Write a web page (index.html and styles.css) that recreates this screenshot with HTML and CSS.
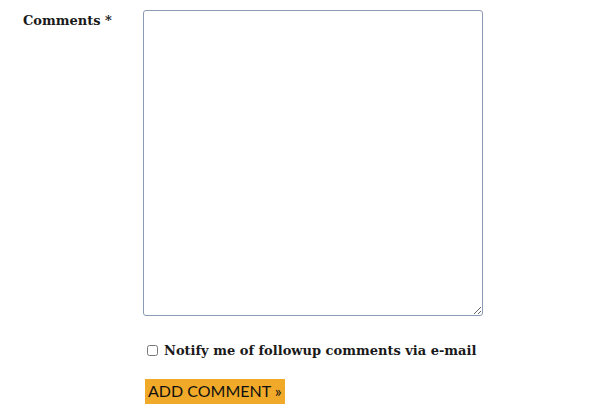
FILE: index.html
```html
<!DOCTYPE html>
<html lang="en">
<head>
    <meta charset="UTF-8">
    <title>Comments</title>
    <link rel="stylesheet" href="styles.css">
</head>
<body>
    <form class="comment-form">
        <div class="form-row">
            <label class="field-label" for="comment">Comments *</label>
            <textarea id="comment" class="comment-box"></textarea>
        </div>
        <div class="form-row">
            <div class="field-label"></div>
            <div class="field-extra">
                <label class="notify"><input type="checkbox" class="notify-box"> Notify me of followup comments via e-mail</label>
                <button type="button" class="submit-btn">ADD COMMENT &raquo;</button>
            </div>
        </div>
    </form>
</body>
</html>
```

FILE: styles.css
```css
body {
    margin: 0;
    background-color: #ffffff;
    font-family: "DejaVu Serif", "Liberation Serif", serif;
    color: #1a1a1a;
}

.comment-form {
    padding-left: 23px;
}

.form-row {
    display: flex;
}

.field-label {
    width: 120px;
    flex-shrink: 0;
    padding-top: 13px;
    font-weight: bold;
    font-size: 13px;
}

.comment-box {
    margin: 10px 0 0 0;
    width: 340px;
    height: 306px;
    box-sizing: border-box;
    border: 1px solid #8c9ab3;
    border-radius: 3px;
    padding: 4px;
}

.field-extra {
    padding-top: 27px;
}

.notify {
    display: flex;
    align-items: center;
    font-weight: bold;
    font-size: 13px;
}

.notify-box {
    margin: 0 6px 0 4px;
    width: 11px;
    height: 11px;
}

.submit-btn {
    display: block;
    margin: 21px 0 0 2px;
    background-color: #f0a928;
    border: none;
    border-radius: 0;
    padding: 3px 3px 4px 3px;
    font-family: "Lato", sans-serif;
    font-size: 16px;
    line-height: 18px;
    color: #111;
    cursor: pointer;
}
```
